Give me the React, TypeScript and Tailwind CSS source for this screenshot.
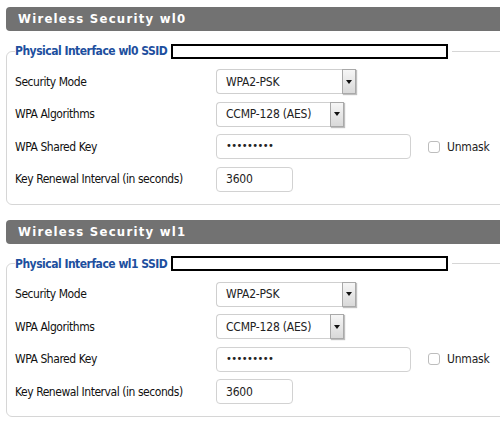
import { ReactNode } from 'react'

const labelFont = { fontFamily: '"DejaVu Sans Condensed", "DejaVu Sans", sans-serif' }

function SelectBox({ value, width }: { value: string; width: string }) {
  return (
    <div className={`flex h-[25px] ${width}`}>
      <div className="flex flex-1 items-center rounded-l-[4px] border border-r-0 border-[#cfcfcf] bg-white pl-[9px] text-[12px] tracking-[-0.2px] text-[#222]">
        {value}
      </div>
      <div className="flex w-[14px] items-center justify-center border border-[#a9a9a9] bg-gradient-to-b from-[#f6f6f6] to-[#d9d9d9] shadow-[1px_1px_1px_rgba(0,0,0,0.25)]">
        <svg width="6" height="4" viewBox="0 0 6 4">
          <path d="M0 0 L6 0 L3 4 Z" fill="#111" />
        </svg>
      </div>
    </div>
  )
}

function TextBox({ value, width, dots }: { value: string; width: string; dots?: boolean }) {
  return (
    <div
      className={`flex h-[25px] items-center rounded-[4px] border border-[#d2d2d2] bg-white pl-[9px] text-[#222] ${width} ${
        dots ? 'text-[11px] tracking-[-0.6px]' : 'text-[12px] tracking-[-0.2px]'
      }`}
    >
      {value}
    </div>
  )
}

function Row({ label, children }: { label: string; children: ReactNode }) {
  return (
    <div className="grid h-[25px] grid-cols-[201px_auto] items-center">
      <span className="text-[12px] tracking-[-0.45px] text-[#111]">{label}</span>
      <div className="flex items-center">{children}</div>
    </div>
  )
}

function SecuritySection({ iface }: { iface: string }) {
  return (
    <section className="pt-[7px]">
      <div className="ml-[6px] flex h-[24px] items-center rounded-[4px] bg-[#727272] pl-[12px]">
        <span className="text-[13px] font-bold tracking-[1.25px] text-white">Wireless Security {iface}</span>
      </div>

      <fieldset className="ml-[6px] mt-[11px] rounded-[6px] border border-[#d6d6d6] pb-[12px] pl-[8px] pr-0 pt-[9px]">
        <legend className="flex items-center gap-[4px] pr-[4px]">
          <span className="text-[12px] font-bold tracking-[-0.5px] text-[#1d4f9e]">Physical Interface {iface} SSID</span>
          <span className="h-[15px] w-[277px] border-2 border-black bg-white" />
        </legend>

        <div className="flex flex-col gap-[7.5px]">
          <Row label="Security Mode">
            <SelectBox value="WPA2-PSK" width="w-[140px]" />
          </Row>
          <Row label="WPA Algorithms">
            <SelectBox value="CCMP-128 (AES)" width="w-[128px]" />
          </Row>
          <Row label="WPA Shared Key">
            <TextBox value="•••••••••" width="w-[195px]" dots />
            <span className="ml-[17px] h-[12px] w-[12px] rounded-[3px] border border-[#bdbdbd] bg-white" />
            <span className="ml-[7px] text-[12px] tracking-[-0.2px] text-[#222]">Unmask</span>
          </Row>
          <Row label="Key Renewal Interval (in seconds)">
            <TextBox value="3600" width="w-[77px]" />
          </Row>
        </div>
      </fieldset>
    </section>
  )
}

export default function App() {
  return (
    <div className="h-[425px] w-[500px] overflow-hidden bg-white" style={labelFont}>
      <div className="w-[560px] pb-[8px]">
        <SecuritySection iface="wl0" />
        <div className="h-[8px]" />
        <SecuritySection iface="wl1" />
      </div>
    </div>
  )
}
